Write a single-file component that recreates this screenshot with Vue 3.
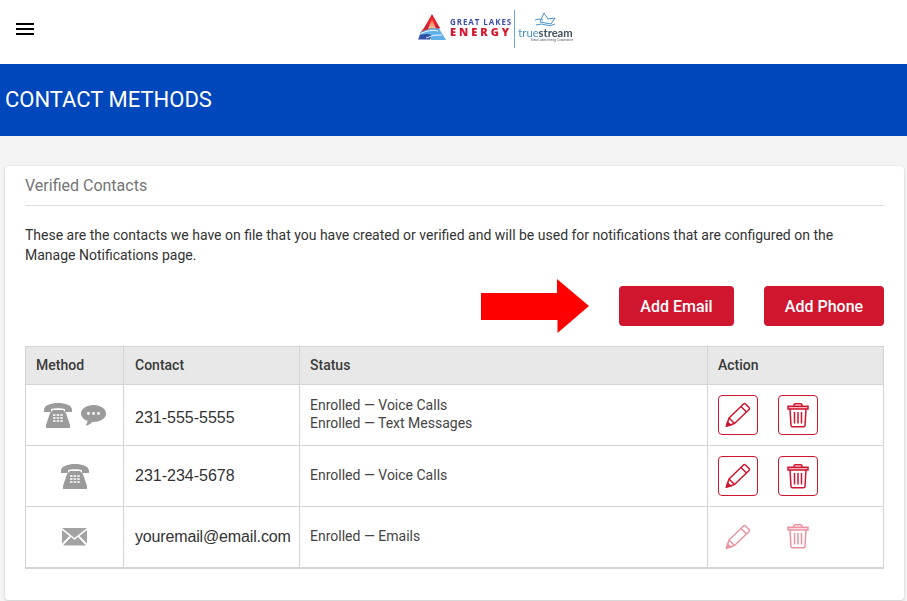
<script setup>
const rows = [
  { id: 1, methods: ['phone', 'chat'], contact: '231-555-5555', status: ['Enrolled — Voice Calls', 'Enrolled — Text Messages'], editable: true, low: true },
  { id: 2, methods: ['phone'], contact: '231-234-5678', status: ['Enrolled — Voice Calls'], editable: true },
  { id: 3, methods: ['mail'], contact: 'youremail@email.com', status: ['Enrolled — Emails'], editable: false, tight: true },
]
</script>

<template>
  <div class="page">
    <header class="topbar">
      <button class="burger" aria-label="Menu"><span></span><span></span><span></span></button>
      <div class="logo">
        <svg class="mark" width="28" height="26" viewBox="0 0 28 26">
          <defs>
            <linearGradient id="peak" x1="0" y1="0" x2="0" y2="1">
              <stop offset="0" stop-color="#d8202e" />
              <stop offset="0.55" stop-color="#e8262c" />
              <stop offset="1" stop-color="#c51f3c" />
            </linearGradient>
            <linearGradient id="glow" x1="0" y1="0" x2="0" y2="1">
              <stop offset="0" stop-color="#f0523c" />
              <stop offset="1" stop-color="#fbc9a4" />
            </linearGradient>
          </defs>
          <path d="M14 0 L22 14 L6 14 Z" fill="url(#peak)" />
          <path d="M6 14 L22 14 L20 16 L2 19 Z" fill="url(#peak)" />
          <path d="M14 5 L18 14.5 L10 14.5 Z" fill="url(#glow)" />
          <path d="M3 18 Q12 13 21 14.5 L28 26 L13 26 Q14 21 1 22 Z" fill="#5fb0e6" />
          <path d="M0 25.5 L2 21 Q10 19 13 21 Q14 23 12 25.5 Z" fill="#2f4fa6" />
          <path d="M3 19.5 Q12 15 20 17 M8 24 Q16 20 24 21" stroke="#fff" stroke-width=".9" fill="none" />
        </svg>
        <div class="gle">
          <span class="gle-top">GREAT LAKES</span>
          <span class="gle-bottom">ENERGY</span>
        </div>
        <i class="divider"></i>
        <div class="ts">
          <svg class="wave" width="23" height="18" viewBox="0 0 23 18" fill="none" stroke="#4a90c8" stroke-width="1">
            <path d="M6 10 L10 1 L14 7 L21 6 L17 12 L6 10 Z" />
            <path d="M1 8 Q5 6 9 8 M2 13 Q8 11 12 13 Q16 15 21 12" />
          </svg>
          <span class="ts-word"><em>true</em><b>stream</b></span>
          <span class="ts-tag">Great Lakes Energy Cooperative</span>
        </div>
      </div>
    </header>

    <div class="banner"><h1>CONTACT METHODS</h1></div>

    <main class="content">
      <section class="card">
        <h2>Verified Contacts</h2>
        <p>These are the contacts we have on file that you have created or verified and will be used for notifications that are configured on the Manage Notifications page.</p>
        <div class="actions">
          <svg class="arrow" width="108" height="54" viewBox="0 0 108 54">
            <path d="M0 14 H76 V0 L108 27 L76.500 54 V41 H0 Z" fill="#ff0000" />
          </svg>
          <button class="primary first">Add Email</button>
          <button class="primary">Add Phone</button>
        </div>
        <table>
          <thead>
            <tr>
              <th class="c1">Method</th>
              <th class="c2">Contact</th>
              <th class="c3">Status</th>
              <th>Action</th>
            </tr>
          </thead>
          <tbody>
            <tr v-for="row in rows" :key="row.id">
              <td class="methods">
                <span class="method-icons">
                  <template v-for="m in row.methods" :key="m">
                    <svg v-if="m === 'phone'" width="28" height="25" viewBox="0 0 28 25" fill="#9b9b9b">
                      <path d="M0 7 C0 2 7 0 14 0 C21 0 28 2 28 7 L28 9 L21 9 L21 6 C18 5 10 5 7 6 L7 9 L0 9 Z" />
                      <path d="M6 10 L9 7 H19 L22 10 L26 22 V25 H2 V22 Z" />
                      <path d="M9 12 H19 M9 15 H19 M9 18 H19" stroke="#fff" stroke-width="1.4" stroke-dasharray="2.6 1" />
                    </svg>
                    <svg v-else-if="m === 'chat'" width="25" height="21" viewBox="0 0 25 21" fill="#9b9b9b">
                      <path d="M12.5 0 C19.500 0 25 3.600 25 8.500 C25 13.400 19.500 17 12.500 17 L11 17 C10 18.500 8 20.500 4.500 20.500 C6 19 6.600 17.200 6.400 15.800 C2.500 14.400 0 11.700 0 8.500 C0 3.600 5.500 0 12.500 0 Z" />
                      <circle cx="7.5" cy="8.5" r="1.4" fill="#fff" /><circle cx="12.5" cy="8.5" r="1.4" fill="#fff" /><circle cx="17.5" cy="8.5" r="1.4" fill="#fff" />
                    </svg>
                    <svg v-else width="25" height="18" viewBox="0 0 25 18" fill="#a3a3a3">
                      <path d="M0 0 H25 L12.500 10 Z" />
                      <path d="M0 2 L7.500 8 L0 15.500 Z M25 2 L17.500 8 L25 15.500 Z" />
                      <path d="M9 9 L12.500 12 L16 9 L24 17.500 H1 Z" />
                    </svg>
                  </template>
                </span>
              </td>
              <td class="contact" :class="{ tight: row.tight, low: row.low }">{{ row.contact }}</td>
              <td class="status"><div v-for="s in row.status" :key="s">{{ s }}</div></td>
              <td class="action">
                <div class="btns" :class="{ off: !row.editable }">
                  <button class="icon" aria-label="Edit">
                    <svg width="26" height="26" viewBox="0 0 26 26" fill="none" stroke="#d0152f" stroke-width="1.5">
                      <path d="M1.500 24 L4 16 L18.500 2 Q19.500 1 20.500 2 L24 5.500 Q25 6.500 24 7.500 L9.500 21.500 Z" stroke-linejoin="round" />
                      <path d="M16 4.500 L21.500 10 M4 16 L9.500 21.500" />
                      <path d="M1.500 24 L2.600 20 L5.500 23 Z" fill="#d0152f" />
                    </svg>
                  </button>
                  <button class="icon" aria-label="Delete">
                    <svg width="22" height="25" viewBox="0 0 22 25" fill="none" stroke="#d0152f" stroke-width="1.5">
                      <path d="M7 3 V2 Q7 .8 8.200 .8 H13.800 Q15 .8 15 2 V3" />
                      <path d="M1 3.200 H21 V6 H1 Z" fill="#f3b6c0" />
                      <path d="M3 6 L4 22.500 Q4.100 23.800 5.400 23.800 H16.600 Q17.900 23.800 18 22.500 L19 6" />
                      <path d="M7.500 9 V20.500 M11 9 V20.500 M14.500 9 V20.500" />
                    </svg>
                  </button>
                </div>
              </td>
            </tr>
          </tbody>
        </table>
      </section>
    </main>
  </div>
</template>

<style>
html, body { margin: 0; background: #f4f4f4; overflow: hidden; }
</style>

<style scoped>
.page { width: 907px; height: 601px; overflow: hidden; font-family: Roboto, sans-serif; color: #333; }
.topbar { height: 64px; background: #fff; position: relative; display: flex; align-items: center; }
.burger { position: absolute; left: 16px; top: 23px; width: 18px; padding: 0; border: 0; background: none; display: flex; flex-direction: column; gap: 3px; }
.burger span { display: block; height: 2px; background: #000; }
.logo { display: flex; align-items: center; height: 38px; margin: -6px 0 0 418px; filter: blur(.3px); }
.mark { margin-top: -4px; flex: none; }
.gle { display: flex; flex-direction: column; margin-left: 4px; margin-top: -5px; width: 64px; }
.gle-top { font: 700 8px/9px "Open Sans", sans-serif; color: #3f4fa8; letter-spacing: .92px; white-space: nowrap; }
.gle-bottom { font: 800 11px/11px "Open Sans", sans-serif; color: #d5152e; letter-spacing: 3px; white-space: nowrap; }
.divider { width: 1px; height: 38px; background: #6ba7d8; margin: 0 3px 0 0; flex: none; }
.ts { display: flex; flex-direction: column; align-items: center; width: 55px; height: 38px; }
.wave { margin-top: 2px; flex: none; }
.ts-word { font: 400 11.2px/10px Lato, sans-serif; color: #4a8fc4; white-space: nowrap; margin-top: -2px; }
.ts-word em { font-style: normal; }
.ts-word b { color: #40505f; font-weight: 700; }
.ts-tag { font: 400 3px/3px Roboto, sans-serif; color: #667; white-space: nowrap; align-self: flex-end; margin-top: 1px; }
.banner { height: 72px; background: #0047bb; display: flex; align-items: center; padding-left: 5px; }
.banner h1 { margin: 0; font: 400 22px/1 Roboto, sans-serif; color: #fff; }
.content { padding: 30px 3px 0 5px; }
.card { background: #fff; border-radius: 4px; box-shadow: 0 1px 3px rgba(0,0,0,.18); padding: 10px 20px 0; height: 434px; box-sizing: border-box; }
.card h2 { margin: 0; padding-bottom: 10px; font: 400 16px/19px Roboto, sans-serif; color: #757575; border-bottom: 1px solid #ddd; }
.card p { margin: 19px 0 0; font: 400 14px/20px Roboto, sans-serif; color: #333; width: 850px; }
.actions { display: flex; align-items: center; justify-content: flex-end; margin-top: 14px; height: 54px; }
.arrow { margin-right: 30px; }
.primary { width: 115px; height: 40px; background: #d0152f; color: #fff; border: 0; border-radius: 4px; font: 500 16px Roboto, sans-serif; padding: 0; }
.primary:last-child { width: 120px; }
.first { margin-right: 30px; }
table { width: 859px; border-collapse: collapse; margin-top: 13px; table-layout: fixed; font-size: 14px; }
th, td { border: 1px solid #d4d4d4; padding: 0 10px; text-align: left; box-sizing: border-box; }
th { height: 38px; background: #e8e8e8; font-weight: 500; color: #3a3a3a; padding-bottom: 2px; }
.c1 { width: 98px; }
.c2 { width: 176px; padding-left: 11px; }
.c3 { width: 408px; }
tbody td { height: 61px; }
tbody tr:last-child td { border-bottom-width: 2px; }
.methods { padding: 0; }
.method-icons { display: flex; justify-content: center; align-items: center; gap: 9px; margin-top: 1px; }
.contact { font: 400 16px "Liberation Sans", sans-serif; color: #333; padding-left: 11px; padding-right: 0; white-space: nowrap; }
.contact.low { padding-top: 6px; }
.contact.tight { letter-spacing: -.15px; }
.status { line-height: 18px; color: #444; padding-bottom: 2px; }
.btns { display: flex; gap: 20px; }
.icon { width: 40px; height: 40px; padding: 0; background: #fff; border: 1px solid #d0152f; border-radius: 4px; display: flex; align-items: center; justify-content: center; }
.btns.off .icon { border-color: transparent; }
.btns.off svg { opacity: .45; }
</style>
